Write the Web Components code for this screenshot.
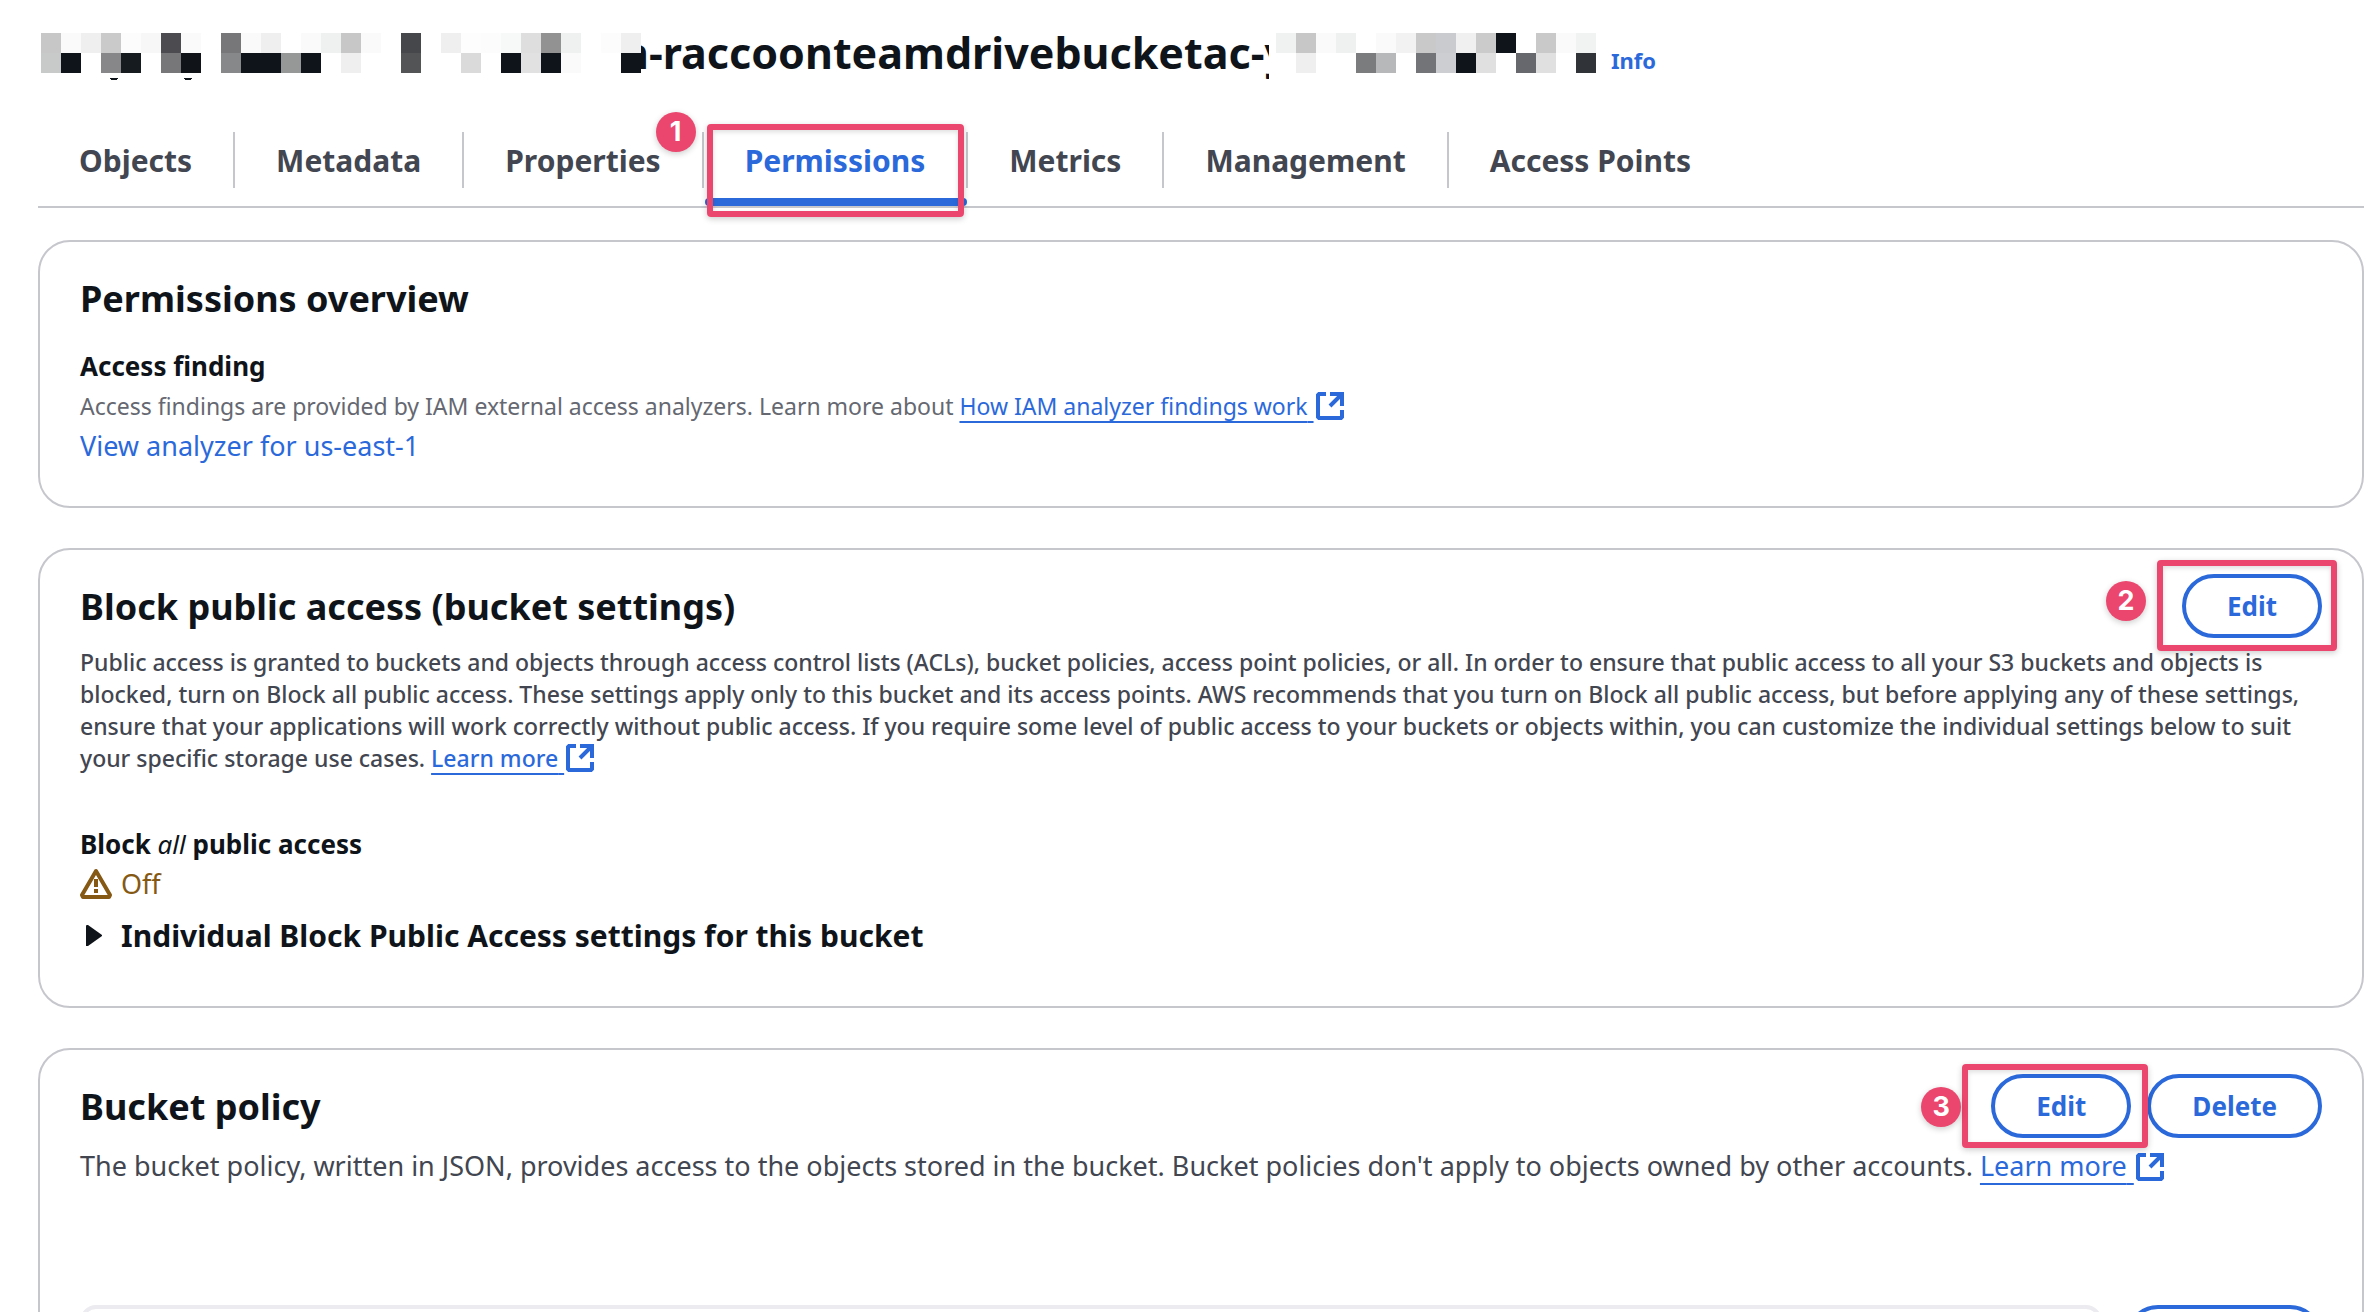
<!DOCTYPE html>
<html lang="en">
<head>
<meta charset="utf-8">
<title>Bucket permissions</title>
<style>
html, body { margin: 0; height: 100%; background: #fff; }
body {
  --ink: #0f141a; --body: #424650; --muted: #656871; --link: #2b69db; --line: #c6c6cd; --warn: #855914; --mark: #eb466d;
  font-family: "Noto Sans", "Open Sans", sans-serif; font-size: 27px; line-height: 36px; color: var(--ink);
}
</style>
</head>
<body>
<bucket-page>
  <bucket-title slot="title"></bucket-title>
  <tab-bar slot="tabs">
    <tab-item>Objects</tab-item>
    <tab-item>Metadata</tab-item>
    <tab-item>Properties</tab-item>
    <call-out n="1" style="--box:-8px 4px -29px 3px;--bx:-57px;--by:-18px"><tab-item active>Permissions</tab-item></call-out>
    <tab-item>Metrics</tab-item>
    <tab-item>Management</tab-item>
    <tab-item last>Access Points</tab-item>
  </tab-bar>

  <info-panel heading="Permissions overview">
    <field-group>
      <span slot="label">Access finding</span>
      <small-text>Access findings are provided by IAM external access analyzers. Learn more about <ext-link small>How IAM analyzer findings work</ext-link></small-text>
      <plain-link>View analyzer for us-east-1</plain-link>
    </field-group>
  </info-panel>

  <info-panel heading="Block public access (bucket settings)">
    <call-out slot="actions" n="2" style="--box:-14px -15px -13px -25px;--bx:-57px;--by:15px"><pill-button>Edit</pill-button></call-out>
    <long-text slot="description">Public access is granted to buckets and objects through access control lists (ACLs), bucket policies, access point policies, or all. In order to ensure that public access to all your S3 buckets and objects is blocked, turn on Block all public access. These settings apply only to this bucket and its access points. AWS recommends that you turn on Block all public access, but before applying any of these settings, ensure that your applications will work correctly without public access. If you require some level of public access to your buckets or objects within, you can customize the individual settings below to suit your specific storage use cases. <ext-link small>Learn more</ext-link></long-text>
    <field-group style="margin-top:34px">
      <span slot="label">Block <i style="font-weight:400">all</i> public access</span>
      <status-warning>Off</status-warning>
    </field-group>
    <expand-section>Individual Block Public Access settings for this bucket</expand-section>
  </info-panel>

  <info-panel heading="Bucket policy">
    <call-out slot="actions" n="3" style="--box:-10px -17px -10px -29px;--bx:-47px;--by:17px"><pill-button>Edit</pill-button></call-out>
    <pill-button slot="actions">Delete</pill-button>
    <policy-text slot="description">The bucket policy, written in JSON, provides access to the objects stored in the bucket. Bucket policies don't apply to objects owned by other accounts. <ext-link>Learn more</ext-link></policy-text>
    <policy-editor></policy-editor>
  </info-panel>
</bucket-page>

<script>
const define = (name, html, setup) => customElements.define(name, class extends HTMLElement {
  constructor() {
    super();
    const t = document.createElement('template');
    t.innerHTML = html;
    this.attachShadow({ mode: 'open' }).append(t.content.cloneNode(true));
  }
  connectedCallback() { if (setup) setup(this, this.shadowRoot); }
});

define('bucket-page', `
<style>
  :host { display: block; height: 100vh; overflow-y: auto; scrollbar-width: none; }
  .page { padding: 24px 10px 40px 38px; }
  .panels { display: flex; flex-direction: column; gap: 40px; margin-top: 32px; }
</style>
<div class="page">
  <slot name="title"></slot>
  <slot name="tabs"></slot>
  <main class="panels"><slot></slot></main>
</div>`);

define('bucket-title', `
<style>
  :host { display: flex; align-items: baseline; gap: 15px; white-space: nowrap; }
  h1 { margin: 0; font-size: 43px; font-weight: 700; line-height: 58px; }
  pixel-mosaic { position: relative; vertical-align: top; }
  .before { margin-right: -20px; }
  .after { margin-left: -20px; }
  a { color: var(--link); font-size: 22px; font-weight: 700; text-decoration: none; }
</style>
<h1><pixel-mosaic class="before" pad="3" marks="69 143"
  upper="c7c7c7 fafafa efefef cacaca fcfcfc f7f7f7 4b4b50 fafafa - 777779 fafafa efefef - fafafa eff1f0 c7c7c7 fafafa - 46474b - efefef fdfdfd fcfcfc f7f9f8 dedede 929293 eff1f1 - fcfcfc efefef"
  lower="c7cac9 0f141a - 878789 161b20 - 777779 101418 - 87888a 0f141a 0f141a 969897 0f141a - efefef - - 535456 - - dadada - 0f141a e1e1e1 0f141a fafafa - - 0f141a"></pixel-mosaic>n-raccoonteamdrivebucketac-y<pixel-mosaic class="after" pad="7"
  upper="eff2f1 c7c7c7 fafafa eff1f1 - fafafa f2f2f2 c9c9c9 cacbce f0f0f0 cbcbcb 0f141a - c9c9c9 fafafa f1f3f2"
  lower="- efefef - - 7b7c7e b7b8ba - 737477 cdced1 0f141a e0e0e0 - 67686d e0e0e0 - 303438"></pixel-mosaic></h1>
<a href="#">Info</a>`);

define('pixel-mosaic', `
<style>:host { display: inline-block; height: 58px; } svg { display: block; background: #fff; }</style>
<svg height="58" shape-rendering="crispEdges" aria-hidden="true"></svg>`, (el, root) => {
  const svg = root.querySelector('svg'), pad = +el.getAttribute('pad');
  const rows = ['upper', 'lower'].map(r => el.getAttribute(r).split(/\s+/));
  svg.setAttribute('width', pad + rows[0].length * 20);
  let out = '';
  rows.forEach((row, j) => row.forEach((c, i) => {
    if (c !== '-') out += `<rect x="${pad + i * 20}" y="${9 + j * 20}" width="20" height="20" fill="#${c}"/>`;
  }));
  (el.getAttribute('marks') || '').split(' ').filter(Boolean).forEach(x => {
    out += `<path d="M${+x + 3} 54h8l-1 2h-6z" fill="#0f141a"/>`;
  });
  svg.innerHTML = out;
});

define('tab-bar', `
<style>
  :host { display: block; margin-top: 50px; }
  nav { display: flex; padding-bottom: 18px; border-bottom: 2px solid var(--line); }
</style>
<nav><slot></slot></nav>`);

define('tab-item', `
<style>
  :host { display: flex; height: 56px; border-right: 2px solid var(--line); position: relative; }
  :host([last]) { border-right: 0; }
  button { border: 0; padding: 2px 41px 0; background: none; font: 700 30px/40px "Noto Sans", sans-serif; color: var(--body); cursor: pointer; }
  :host([active]) button { color: var(--link); }
  :host([active])::after { content: ""; position: absolute; left: 1px; right: -1px; bottom: -18px; height: 8px; border-radius: 4px; background: var(--link); }
</style>
<button type="button"><slot></slot></button>`);

define('call-out', `
<style>
  :host { display: block; position: relative; }
  .box { position: absolute; inset: var(--box); z-index: 2; border: 6px solid var(--mark); border-radius: 4px; pointer-events: none; box-shadow: 0 2px 6px #0003, inset 0 2px 5px #0002; }
  .badge { position: absolute; left: var(--bx); top: var(--by); width: 40px; height: 40px; border-radius: 50%; background: var(--mark); color: #fff; font: 700 27px/40px Inter, sans-serif; text-align: center; box-shadow: 0 2px 6px #0003; }
</style>
<slot></slot>
<div class="box"><span class="badge"></span></div>`, (el, root) => {
  root.querySelector('.badge').textContent = el.getAttribute('n');
});

define('info-panel', `
<style>
  :host { display: block; border: 2px solid var(--line); border-radius: 32px; padding: 24px 40px 42px; }
  header { display: flex; align-items: center; justify-content: space-between; height: 64px; }
  h2 { margin: 0; padding-top: 2px; font-size: 36px; font-weight: 700; line-height: 44px; }
  .actions { display: flex; gap: 16px; }
</style>
<header><h2></h2><div class="actions"><slot name="actions"></slot></div></header>
<slot name="description"></slot>
<slot></slot>`, (el, root) => {
  root.querySelector('h2').textContent = el.getAttribute('heading');
});

define('field-group', `
<style>
  :host { display: flex; flex-direction: column; gap: 4px; padding-top: 18px; }
  .label { font-size: 26px; font-weight: 700; }
</style>
<div class="label"><slot name="label"></slot></div>
<slot></slot>`);

define('small-text', `
<style>:host { display: block; font-size: 23px; color: var(--muted); }</style><slot></slot>`);

define('long-text', `
<style>:host { display: block; margin-top: 8px; font-size: 23px; line-height: 32px; font-weight: 500; color: var(--body); }</style><slot></slot>`);

define('policy-text', `
<style>:host { display: block; margin-top: 8px; line-height: 40px; color: var(--body); }</style><slot></slot>`);

define('plain-link', `
<style>:host { display: block; } a { color: var(--link); text-decoration: none; }</style>
<a href="#"><slot></slot></a>`);

define('ext-link', `
<style>
  :host { display: inline; }
  a { color: var(--link); text-decoration: underline 2px; text-underline-offset: 7px; text-decoration-skip-ink: none; }
  :host([small]) a { text-underline-offset: 6px; }
  svg { width: 28px; height: 28px; margin: -6px 0 -6px 2px; vertical-align: 1px; }
</style>
<a href="#"><slot></slot>&nbsp;<svg viewBox="0 0 28 28" fill="none" stroke="currentColor" stroke-width="4" aria-hidden="true"><path d="M10 2H3L2 3V25L3 26H25L26 25V18M14 2H26V14M25 3L14 14"/></svg></a>`);

define('pill-button', `
<style>
  :host { display: block; }
  button { display: block; height: 64px; padding: 0 41px; border: 4px solid var(--link); border-radius: 32px; background: #fff; color: var(--link); font: 700 26px/36px "Noto Sans", sans-serif; cursor: pointer; }
</style>
<button type="button"><slot></slot></button>`);

define('status-warning', `
<style>
  :host { display: flex; align-items: center; gap: 9px; color: var(--warn); }
  svg { width: 32px; height: 32px; }
</style>
<svg viewBox="0 0 32 32" fill="none" stroke="currentColor" stroke-width="4" stroke-linejoin="round" aria-hidden="true"><path d="M16 3L2 27L3 29H29L30 27Z"/><path d="M16 11V19M16 21V25"/></svg>
<span><slot></slot></span>`);

define('expand-section', `
<style>
  :host { display: block; padding: 10px 0 4px; }
  summary { display: flex; align-items: center; gap: 9px; list-style: none; font-size: 30px; line-height: 48px; font-weight: 700; cursor: pointer; }
  svg { width: 32px; height: 32px; }
</style>
<details><summary><svg viewBox="0 0 32 32" aria-hidden="true"><path d="M6 6Q6 5 7 5L8 5L22 15V16L8 26H6Z" fill="currentColor"/></svg><span><slot></slot></span></summary></details>`);

define('policy-editor', `
<style>
  :host { display: flex; gap: 24px; align-items: flex-start; margin-top: 119px; }
  textarea { flex: 1; height: 400px; box-sizing: border-box; border: 4px solid #ebebf0; border-radius: 16px; background: #fff; resize: none; }
  button { display: flex; align-items: center; justify-content: center; width: 196px; height: 64px; border: 4px solid var(--link); border-radius: 32px; background: #fff; color: var(--link); }
</style>
<textarea readonly aria-label="Bucket policy"></textarea>
<button type="button" aria-label="Copy"></button>`);
</script>
</body>
</html>
